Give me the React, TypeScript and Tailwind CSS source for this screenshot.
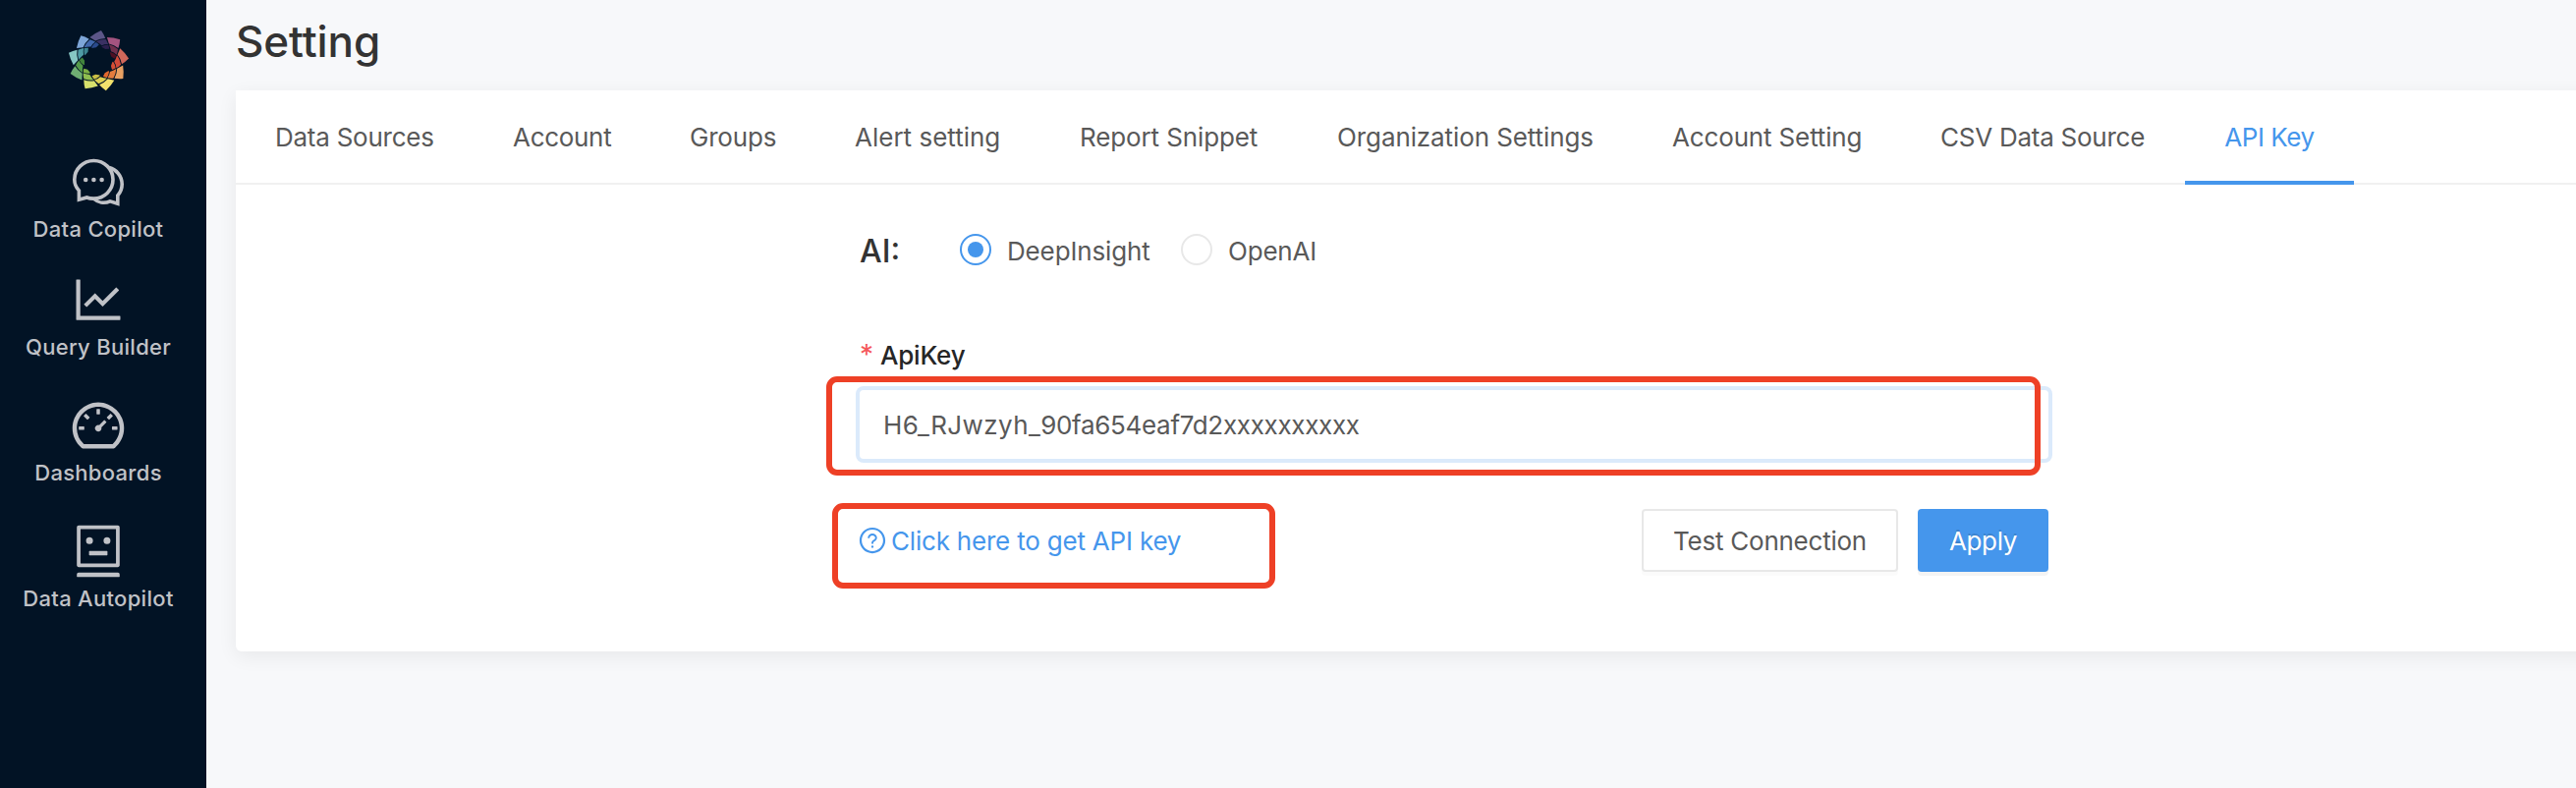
import type { ReactNode } from "react";
import {
  AiOutlineDashboard,
  AiOutlineLineChart,
  AiOutlineQuestionCircle,
  AiOutlineRobot,
} from "react-icons/ai";

const blades = [
  ["#5c5688", "#3a3163", "#2a1f4d"],
  ["#a45480", "#6f2f4d", "#4f1023"],
  ["#d0675a", "#d24a3a", "#d54e35"],
  ["#e9a163", "#e57c3d", "#e2682e"],
  ["#f2e16c", "#ddd053", "#c9be45"],
  ["#d8e06c", "#90be4f", "#7fb145"],
  ["#6fae72", "#549a49", "#42853c"],
  ["#86c7c4", "#4f9ba5", "#3d8490"],
  ["#7ea6d8", "#4168ac", "#2a4a8c"],
];

function Logo() {
  return (
    <svg viewBox="-100 -100 200 200" className="h-[66px] w-[66px]">
      {blades.map(([outer, mid, inner], i) => (
        <g key={i} transform={`rotate(${i * 40})`}>
          <path d="M-26 -73Q-10 -86 9 -94Q17 -83 22 -70Q6 -70 -9 -62Z" fill={outer} />
          <path d="M-7 -60Q6 -67 23 -67Q28 -60 31 -51Q20 -52 11 -48Q3 -55 -7 -60Z" fill={mid} />
          <path d="M13 -46Q22 -50 31 -49Q34 -43 34 -37L22 -36L10 -43Z" fill={inner} />
        </g>
      ))}
    </svg>
  );
}

function ChatIcon() {
  return (
    <svg viewBox="0 0 60 60" className="h-[60px] w-[60px]" fill="none" stroke="currentColor" strokeWidth="3.6">
      <path d="M10.4 48.2V39C6.8 35.3 5.8 31.5 5.8 27.8A19.6 19.3 0 1 1 25.4 47.1C22.6 47.1 20.3 46.8 18.4 46Z" />
      <path d="M41 15.6C48.5 17.5 54.2 24 54.2 32.6C54.2 37.5 52.6 41 49.8 44V52.2L42 49.8C36 52.5 29.5 51 25 47" />
      <g fill="currentColor" stroke="none">
        <circle cx="17.2" cy="28" r="2.3" />
        <circle cx="25.4" cy="28" r="2.3" />
        <circle cx="33.6" cy="28" r="2.3" />
      </g>
    </svg>
  );
}

function NavItem({ icon, label, className = "" }: { icon: ReactNode; label: string; className?: string }) {
  return (
    <a className={`flex flex-col items-center gap-1.5 ${className}`}>
      {icon}
      <span className="text-[22px] leading-6 font-[450] tracking-[0.3px] whitespace-nowrap">{label}</span>
    </a>
  );
}

const tabs = [
  { label: "Data Sources", style: "w-[242px] tracking-[-0.25px]" },
  { label: "Account", style: "w-[180px] tracking-[-0.3px]" },
  { label: "Groups", style: "w-[168px] tracking-[-0.2px]" },
  { label: "Alert setting", style: "w-[229px]" },
  { label: "Report Snippet", style: "w-[262px] tracking-[-0.12px]" },
  { label: "Organization Settings", style: "w-[341px] tracking-[-0.1px]" },
  { label: "Account Setting", style: "w-[272px] tracking-[-0.15px]" },
  { label: "CSV Data Source", style: "w-[290px] pl-[41px] tracking-[-0.25px]" },
];

export default function App() {
  return (
    <div className="relative flex h-[802px] w-[2622px] overflow-hidden bg-[#f7f8fa] font-['Inter','Liberation_Sans',sans-serif] text-[26px] text-[#595959]">
      <aside className="flex w-[210px] shrink-0 flex-col bg-[#021325] pr-[10px] text-[#c0c2c7]">
        <div className="flex h-[155px] justify-center pt-[29px]">
          <Logo />
        </div>
        <nav className="flex flex-col">
          <NavItem icon={<ChatIcon />} label="Data Copilot" />
          <NavItem icon={<AiOutlineLineChart size={60} />} label="Query Builder" className="mt-[30px]" />
          <NavItem icon={<AiOutlineDashboard size={60} />} label="Dashboards" className="mt-[38px]" />
          <NavItem icon={<AiOutlineRobot size={60} />} label="Data Autopilot" className="mt-[38px]" />
        </nav>
      </aside>

      <main className="flex-1 pl-[30px]">
        <h1 className="flex h-[92px] items-center pb-2 text-[44px] leading-[60px] font-medium tracking-[-0.1px] text-[#333333]">Setting</h1>
        <section className="-mr-10 h-[571px] rounded-b-[6px] bg-white shadow-[0_5px_20px_rgba(0,0,0,0.065)]">
          <div className="flex h-24 border-b-2 border-[#f0f0f0]">
            {tabs.map((t) => (
              <div key={t.label} className={`flex h-[94px] items-center pl-10 whitespace-nowrap ${t.style}`}>
                {t.label}
              </div>
            ))}
            <div className="flex h-24 w-[172px] items-center justify-center border-b-4 border-[#4596ec] pt-0.5 tracking-[-0.45px] whitespace-nowrap text-[#4596ec]">
              API Key
            </div>
          </div>

          <form className="ml-[635px] w-[1210px]">
            <div className="flex h-[132px] items-center">
              <span className="w-[102px] pt-[3px] text-[32px] font-medium text-[#333333]">AI:</span>
              <span className="flex h-8 w-8 items-center justify-center rounded-full border-2 border-[#4596ec]">
                <span className="h-4 w-4 rounded-full bg-[#4596ec]" />
              </span>
              <span className="w-[193px] pt-0.5 pl-4 tracking-[-0.15px]">DeepInsight</span>
              <span className="h-8 w-8 rounded-full border-2 border-[#e8e8e8]" />
              <span className="pt-0.5 pl-4 tracking-[-0.2px]">OpenAI</span>
            </div>
            <label className="mt-[21px] flex h-10 items-center gap-2 font-medium tracking-[-0.2px] text-[#262626]">
              <span className="w-[13px] text-[28px] font-normal text-[#f5575a]">*</span>
              ApiKey
            </label>
            <div className="mt-4 flex h-[70px] items-center rounded-[4px] bg-white pl-6 ring-4 ring-[#dbeafb]">
              <span className="tracking-[0.4px]">H6_RJwzyh_</span>
              <span className="tracking-[-0.32px]">90fa654eaf7d2xxxxxxxxxx</span>
            </div>
            <div className="mt-[51px] flex h-16 items-center">
              <a className="flex flex-1 items-center gap-1 tracking-[-0.2px] text-[#4596ec]">
                <AiOutlineQuestionCircle size={30} className="-ml-0.5" />
                Click here to get API key
              </a>
              <button type="button" className="h-16 w-[261px] rounded-[4px] border-2 border-[#e8e8e8] bg-white tracking-[-0.25px] whitespace-nowrap shadow-[0_4px_0_rgba(0,0,0,0.015)]">
                Test Connection
              </button>
              <button type="button" className="ml-5 h-16 w-[133px] rounded-[4px] bg-[#4596ec] tracking-[-0.35px] text-white shadow-[0_4px_0_rgba(0,0,0,0.045)] [text-shadow:0_-2px_0_rgba(0,0,0,0.12)]">
                Apply
              </button>
            </div>
          </form>
        </section>
      </main>

      <div className="absolute top-[383px] left-[841px] h-[101px] w-[1236px] rounded-[11px] border-6 border-[#ee4026]" />
      <div className="absolute top-[512px] left-[847px] h-[87px] w-[451px] rounded-[11px] border-6 border-[#ee4026]" />
    </div>
  );
}
